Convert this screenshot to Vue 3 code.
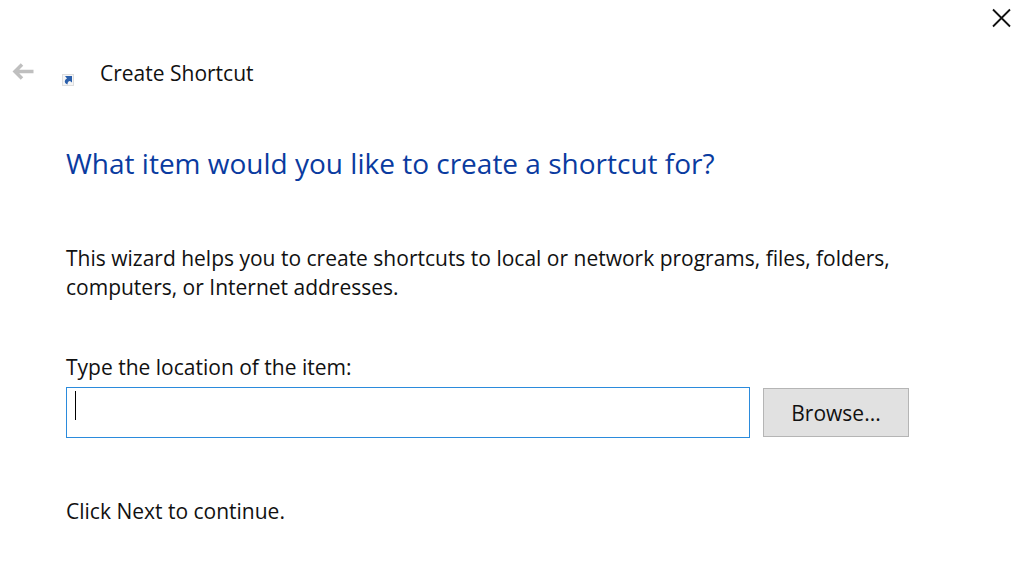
<script setup>
import { ref, onMounted } from 'vue'
const location = ref('')
const field = ref(null)
onMounted(() => field.value.focus())
</script>

<template>
  <main class="wizard">
    <div class="bar">
      <button class="icon-button close" type="button" aria-label="Close">
        <svg width="20" height="20" viewBox="0 0 20 20"><path d="M2 1.500 19 18.500M19 1.500 2 18.500" fill="none" stroke="#111" stroke-width="1.800" /></svg>
      </button>
    </div>
    <header class="head">
      <button class="icon-button back" type="button" aria-label="Back" disabled>
        <svg width="22" height="18" viewBox="0 0 22 18"><path d="M21.500 8.500H4M10 1.500 3 8.500l7 7" fill="none" stroke="#bfbfbf" stroke-width="3.500" /></svg>
      </button>
      <svg class="shortcut" width="12" height="12" viewBox="0 0 12 12">
        <rect x=".5" y=".5" width="11" height="11" fill="#f5f5f5" stroke="#dedede" />
        <path d="M3 2h7v6.500L8 7Q5.500 7 5.500 10.500 2 9 3 6.500 3.500 5 5 4.500z" fill="#2b5fab" />
      </svg>
      <span class="name">Create Shortcut</span>
    </header>
    <section class="body">
      <h1>What item would you like to create a shortcut for?</h1>
      <p class="intro">This wizard helps you to create shortcuts to local or network programs, files, folders, computers, or Internet addresses.</p>
      <label for="location">Type the location of the item:</label>
      <div class="row">
        <div class="field">
          <input id="location" ref="field" v-model="location" type="text" autocomplete="off" />
          <span class="caret" aria-hidden="true"></span>
        </div>
        <button class="browse" type="button">Browse...</button>
      </div>
      <p class="next">Click Next to continue.</p>
    </section>
  </main>
</template>

<style>
body { margin: 0; background: #fff; }
</style>

<style scoped>
.wizard { font: 21px/29px "Open Sans", "Noto Sans", sans-serif; color: #111; }
.bar { display: flex; justify-content: flex-end; padding: 8px 13px 0 0; }
.icon-button { display: flex; padding: 0; border: 0; background: none; }
.head { display: flex; align-items: center; padding: 31px 0 0 12px; }
.back { margin-top: -4px; }
.shortcut { margin: 12px 26px 0 28px; }
h1 { margin: 0; font-size: 28px; line-height: 40px; font-weight: 400; color: #0a3ba0; }
.body { padding: 55px 115px 0 66px; }
.intro { margin: 61px 0 51px; }
label { display: block; }
.row { display: flex; gap: 13px; margin-top: 5px; }
.field { position: relative; flex: 1; }
input { box-sizing: border-box; width: 100%; height: 51px; padding: 0 9px; border: 1px solid #2b8bdc; outline: 0; font: inherit; caret-color: transparent; display: block; }
.caret { position: absolute; left: 9px; top: 4px; width: 1px; height: 29px; background: #000; }
.browse { width: 146px; height: 49px; margin-top: 1px; padding: 2px 0 0; border: 1px solid #b5b5b5; background: #e1e1e1; font: inherit; color: #111; }
.next { margin: 59px 0 0; }
</style>
